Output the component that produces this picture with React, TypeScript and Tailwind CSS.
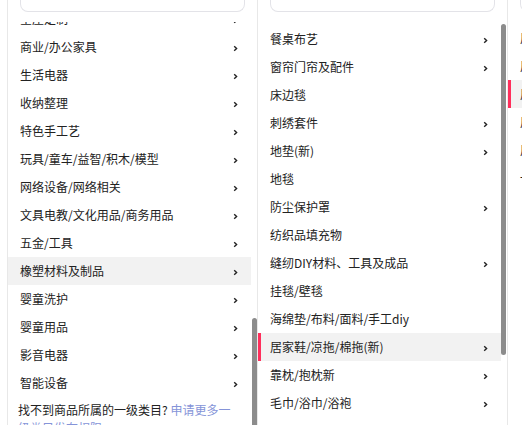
import React from "react";

type Item = { name: string; more?: boolean };

const leftItems: Item[] = [
  { name: "全屋定制", more: true },
  { name: "商业/办公家具", more: true },
  { name: "生活电器", more: true },
  { name: "收纳整理", more: true },
  { name: "特色手工艺", more: true },
  { name: "玩具/童车/益智/积木/模型", more: true },
  { name: "网络设备/网络相关", more: true },
  { name: "文具电教/文化用品/商务用品", more: true },
  { name: "五金/工具", more: true },
  { name: "橡塑材料及制品", more: true },
  { name: "婴童洗护", more: true },
  { name: "婴童用品", more: true },
  { name: "影音电器", more: true },
  { name: "智能设备", more: true },
];

const midItems: Item[] = [
  { name: "餐桌布艺", more: true },
  { name: "窗帘门帘及配件", more: true },
  { name: "床边毯" },
  { name: "刺绣套件", more: true },
  { name: "地垫(新)", more: true },
  { name: "地毯" },
  { name: "防尘保护罩", more: true },
  { name: "纺织品填充物" },
  { name: "缝纫DIY材料、工具及成品", more: true },
  { name: "挂毯/壁毯" },
  { name: "海绵垫/布料/面料/手工diy" },
  { name: "居家鞋/凉拖/棉拖(新)", more: true },
  { name: "靠枕/抱枕新", more: true },
  { name: "毛巾/浴巾/浴袍", more: true },
];

const rightItems: Item[] = [
  { name: "居家拖鞋" },
  { name: "居家凉拖" },
  { name: "居家棉拖" },
  { name: "居家布鞋" },
  { name: "居家袜鞋" },
  { name: "一次性拖鞋" },
];

function Chevron() {
  return (
    <svg width="5" height="7" viewBox="0 0 5 7" className="mt-[3px] shrink-0">
      <path d="M1.2 1.2 L3.6 3.5 L1.2 5.8" fill="none" stroke="#222" strokeWidth="1.4" />
    </svg>
  );
}

// marked: grey row with the red bar, active: grey row only
function Row({ item, active, marked }: { item: Item; active?: boolean; marked?: boolean }) {
  return (
    <div
      className={
        "relative flex h-[28px] items-center justify-between whitespace-nowrap pl-[12px] pr-[13px] " +
        (active || marked ? "bg-[#f2f2f2]" : "")
      }
    >
      {marked && <div className="absolute left-0 top-0 h-full w-[3px] bg-[#ff2e5b]" />}
      <span>{item.name}</span>
      {item.more && <Chevron />}
    </div>
  );
}

function SearchStub() {
  return <div className="mx-[12px] h-[12px] rounded-b-[8px] border border-t-0 border-[#e3e3e8]" />;
}

export default function App() {
  return (
    <div
      className="flex h-[425px] w-[522px] overflow-hidden bg-white pl-[7px] text-[12px] text-[#222]"
      style={{ fontFamily: '"Noto Sans CJK SC", "Noto Sans", sans-serif' }}
    >
      {/* 一级类目 */}
      <div className="relative flex h-full w-[250px] shrink-0 flex-col border-l border-[#e8e8e8]">
        <SearchStub />
        <div className="mt-[10px] flex-1 overflow-hidden pr-[6px]">
          <div className="-mt-[17px]">
            {leftItems.map((it) => (
              <Row key={it.name} item={it} active={it.name === "橡塑材料及制品"} />
            ))}
            <div className="pl-[10px] pr-[16px] pt-[4px] leading-[18px]">
              找不到商品所属的一级类目? <span className="text-[#8594d8]">申请更多一级类目发布权限</span>
            </div>
          </div>
        </div>
        <div className="absolute left-[244px] top-[318px] h-[140px] w-[5px] rounded-full bg-[#8c8c8c]" />
      </div>

      {/* 二级类目 */}
      <div className="relative flex h-full w-[250px] shrink-0 flex-col border-l border-[#e8e8e8]">
        <SearchStub />
        <div className="mt-[13px] flex-1 overflow-hidden pr-[6px]">
          {midItems.map((it) => (
            <Row key={it.name} item={it} marked={it.name === "居家鞋/凉拖/棉拖(新)"} />
          ))}
        </div>
        <div className="absolute left-[243px] top-[24px] h-[331px] w-[5px] rounded-full bg-[#8c8c8c]" />
      </div>

      {/* 三级类目 */}
      <div className="flex h-full w-[250px] shrink-0 flex-col border-l border-[#e8e8e8]">
        <SearchStub />
        <div className="mt-[12px] flex-1 overflow-hidden">
          {rightItems.map((it) => (
            <Row key={it.name} item={it} marked={it.name === "居家棉拖"} />
          ))}
        </div>
      </div>
    </div>
  );
}
